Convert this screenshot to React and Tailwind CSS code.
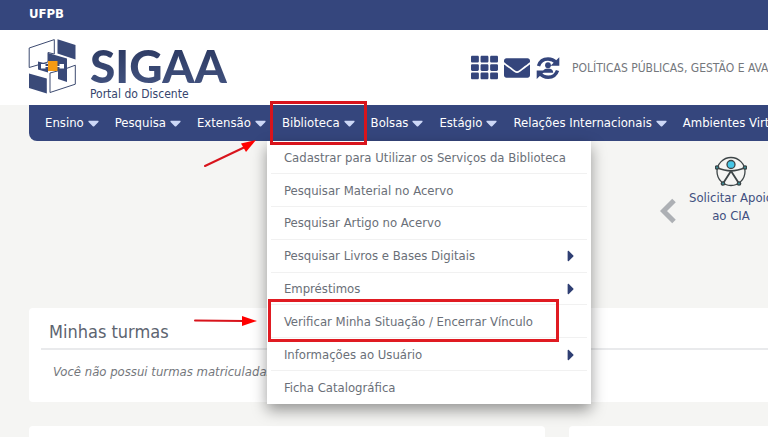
import { FaTh, FaEnvelope, FaCaretDown, FaCaretRight } from 'react-icons/fa';

const menuItems = [
  { label: 'Ensino' },
  { label: 'Pesquisa' },
  { label: 'Extensão' },
  { label: 'Biblioteca', open: true },
  { label: 'Bolsas' },
  { label: 'Estágio' },
  { label: 'Relações Internacionais' },
  { label: 'Ambientes Virtuais' },
];

const libraryItems = [
  { label: 'Cadastrar para Utilizar os Serviços da Biblioteca' },
  { label: 'Pesquisar Material no Acervo' },
  { label: 'Pesquisar Artigo no Acervo' },
  { label: 'Pesquisar Livros e Bases Digitais', nested: true },
  { label: 'Empréstimos', nested: true },
  { label: 'Verificar Minha Situação / Encerrar Vínculo', marked: true },
  { label: 'Informações ao Usuário', nested: true },
  { label: 'Ficha Catalográfica' },
];

const Logo = () => (
  <svg viewBox="0 0 48 56" className="h-14 w-12 shrink-0" aria-hidden="true">
    <path d="M1.2 10 26.3 1.6V16L20 14.5V24L1.2 29.5z" fill="#fff" stroke="#3c4a70" />
    <path d="M29.5 1.2 47.5 7v14.5L29.5 15.5z" fill="#3a4a78" />
    <path d="M22 35v19.5l25.3-8.3V27.2L37 31z" fill="#fff" stroke="#3c4a70" />
    <path d="M1 35.5 18.8 40.5v15L1 50z" fill="#3a4a78" />
    <path d="M20 15 39 20.5V44L30 41V33H20z" fill="#3a4a78" />
    <path d="M10 23.5 20 26v8.5L10 31.5z" fill="#3a4a78" />
    <path d="M15 28.5h20" stroke="#fff" />
    <path d="M13 26h4.5v4.5H13zM31.5 26H36v4.5h-4.5z" fill="#fff" />
    <path d="M20 23h9.5v10H20z" fill="#f59a13" />
  </svg>
);

const SyncUserIcon = () => (
  <svg viewBox="0 0 24 24" className="size-6" fill="none" aria-hidden="true">
    <path d="M2.5 10C4 5 7.5 3 12 3c3.5 0 6 1.2 8 3.5" stroke="currentColor" strokeWidth="3.4" />
    <path d="M23.3 1.2v8.600h-8.800z" fill="currentColor" />
    <path d="M21.5 14.5C20 19.2 16.5 21.2 12.2 21.2c-3.5 0-6.2-1.2-8-3.700" stroke="currentColor" strokeWidth="3.4" />
    <path d="M.7 23v-8.600h8.800z" fill="currentColor" />
    <circle cx="12" cy="9.2" r="2.9" fill="currentColor" />
    <path d="M6.8 16.8c0-3 2-4.200 5.200-4.200s5.200 1.200 5.200 4.200z" fill="currentColor" />
  </svg>
);

const AccessibilityIcon = () => (
  <svg viewBox="0 0 32 32" className="size-8" fill="none" stroke="#3d4547" strokeWidth="1.3" aria-hidden="true">
    <circle cx="16" cy="16.5" r="14" />
    <path d="M1.5 12.5c5 2 9 3.300 14.500 3.300s9.500-1.300 14.500-3.300M16 16 8 28.5M16 16l8 12.5" strokeWidth="1.8" />
    <circle cx="16" cy="9.5" r="4" fill="#46c6e6" />
    <g fill="#3a8f98">
      <circle cx="2" cy="12.5" r="1.7" />
      <circle cx="30" cy="12.5" r="1.7" />
      <circle cx="8" cy="28.5" r="1.7" />
      <circle cx="24" cy="28.5" r="1.7" />
    </g>
  </svg>
);

const LibraryMenu = () => (
  <ul className="absolute top-full -left-[15px] z-10 grid h-[263px] w-[324px] grid-rows-8 bg-white px-1 text-[#6a6f78] shadow-[0_6px_14px_rgba(0,0,0,0.4)]">
    {libraryItems.map((item) => (
      <li key={item.label} className="relative border-b border-[#f1f1f1] last:border-b-0">
        <a href="#" className="flex h-full items-center justify-between pt-px pr-3 pl-[13px]">
          {item.label}
          {item.nested && <FaCaretRight className="h-[18px] w-2 text-[#2f3f73]" />}
        </a>
        {item.marked && (
          <>
            <span className="pointer-events-none absolute -top-1.5 -left-[3px] h-[43px] w-[291px] border-3 border-[#e01b22]" />
            <svg viewBox="0 0 64 12" className="absolute top-2.5 -left-[77px] h-3 w-16" aria-hidden="true">
              <path d="M1 5.5 50 6" stroke="#d8141c" strokeWidth="2" strokeLinecap="round" />
              <path d="M48 1v10l15-5z" fill="#f00" />
            </svg>
          </>
        )}
      </li>
    ))}
  </ul>
);

const App = () => {
  return (
    <div className="h-screen overflow-hidden bg-[#f5f5f3] font-['DejaVu_Sans_Condensed','Noto_Sans',sans-serif] text-[13px]">
      <div className="h-[30px] bg-[#35467d] px-[29px] leading-7 font-bold text-white">UFPB</div>

      <header className="flex h-[75px] items-start bg-white pl-7 whitespace-nowrap">
        <a href="#" className="flex w-[443px] shrink-0 items-start gap-3.5 pt-2 text-[#36456d]">
          <Logo />
          <span className="flex flex-col pt-2">
            <span className="bg-gradient-to-b from-[#2c3a62] to-[#42527f] bg-clip-text font-['Lato'] text-[46px] leading-10 font-black text-transparent">
              SIGAA
            </span>
            <span className="text-xs leading-4">Portal do Discente</span>
          </span>
        </a>
        <div className="flex items-center gap-1.5 pt-6 text-[#34457c]">
          <button aria-label="Módulos">
            <FaTh className="size-[27px]" />
          </button>
          <button aria-label="Mensagens">
            <FaEnvelope className="size-[26px]" />
          </button>
          <button aria-label="Trocar vínculo">
            <SyncUserIcon />
          </button>
          <span className="ml-1.5 text-xs text-[#74777c]">POLÍTICAS PÚBLICAS, GESTÃO E AVALIAÇÃO</span>
        </div>
      </header>

      <nav className="relative ml-[29px] rounded-bl-lg bg-[#35467d] pl-4">
        <ul className="flex h-9 gap-4 whitespace-nowrap text-white">
          {menuItems.map((item) => (
            <li key={item.label} className="relative flex items-center">
              <button className="flex items-center gap-1">
                {item.label}
                <FaCaretDown className="h-[18px] w-[11px] text-[#cdd8f7]" />
              </button>
              {item.open && (
                <>
                  <LibraryMenu />
                  <span className="pointer-events-none absolute -inset-x-3 -inset-y-1 z-20 border-3 border-[#d8141c]" />
                </>
              )}
            </li>
          ))}
        </ul>
        <svg viewBox="0 0 54 30" className="absolute top-[33px] left-[174px] h-[30px] w-[54px]" aria-hidden="true">
          <path d="M2 28 42 9" stroke="#d8141c" strokeWidth="2" strokeLinecap="round" />
          <path d="M38 5.5 53 2 43 14z" fill="#f00" />
        </svg>
      </nav>

      <main>
        <section className="flex h-[167px] items-start pt-3.5 pl-[660px]">
          <button aria-label="Anterior" className="mt-[43px] text-[#adb0b4]">
            <svg viewBox="0 0 16 26" className="h-[26px] w-4" aria-hidden="true">
              <path d="M14 2.5 3.500 13 14 23.5" fill="none" stroke="currentColor" strokeWidth="5" />
            </svg>
          </button>
          <a href="#" className="ml-1.5 flex w-[98px] shrink-0 flex-col items-center text-center leading-[18px] text-[#414f80]">
            <AccessibilityIcon />
            <span className="mt-0.5">
              Solicitar Apoio
              <br />
              ao CIA
            </span>
          </a>
        </section>

        <section className="ml-[29px] h-[94px] rounded-l bg-white pt-2 pl-3">
          <h2 className="border-b-2 border-[#e9eaec] pl-2 text-lg leading-8 text-[#5d6470]">Minhas turmas</h2>
          <p className="pt-3.5 pl-3 leading-4 text-[#74777c] italic">Você não possui turmas matriculadas nesse semestre.</p>
        </section>

        <div className="mt-6 grid grid-cols-[516px_1fr] gap-6 pl-[29px]">
          <section className="h-20 rounded bg-white" />
          <section className="h-20 rounded-l bg-white" />
        </div>
      </main>
    </div>
  );
};

export default App;
